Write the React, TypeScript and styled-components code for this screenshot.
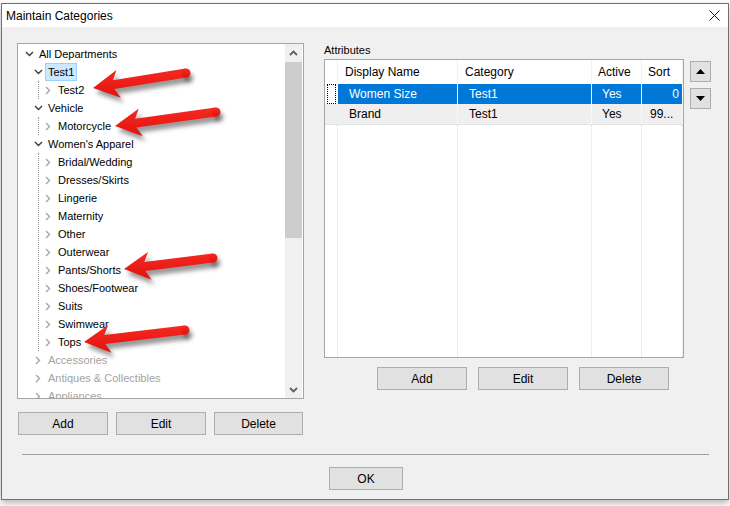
import React from 'react';
import styled, { createGlobalStyle } from 'styled-components';

interface INode {
  label: string;
  open?: boolean;
  selected?: boolean;
  disabled?: boolean;
  children?: INode[];
}

const departments: INode = {
  label: 'All Departments',
  open: true,
  children: [
    { label: 'Test1', open: true, selected: true, children: [{ label: 'Test2' }] },
    { label: 'Vehicle', open: true, children: [{ label: 'Motorcycle' }] },
    {
      label: "Women's Apparel",
      open: true,
      children: [
        'Bridal/Wedding',
        'Dresses/Skirts',
        'Lingerie',
        'Maternity',
        'Other',
        'Outerwear',
        'Pants/Shorts',
        'Shoes/Footwear',
        'Suits',
        'Swimwear',
        'Tops',
      ].map(label => ({ label })),
    },
    { label: 'Accessories', disabled: true },
    { label: 'Antiques & Collectibles', disabled: true },
    { label: 'Appliances', disabled: true },
  ],
};

interface IAttr {
  name: string;
  category: string;
  active: string;
  sort: string;
  selected?: boolean;
}

const attributes: IAttr[] = [
  { name: 'Women Size', category: 'Test1', active: 'Yes', sort: '0', selected: true },
  { name: 'Brand', category: 'Test1', active: 'Yes', sort: '99...' },
];

// tip and tail of each red callout arrow, page coordinates
const callouts: [number, number, number, number][] = [
  [93, 88, 186, 73],
  [115, 126, 216, 112],
  [124, 269, 213, 258],
  [84, 342, 185, 330],
];

const GlobalStyle = createGlobalStyle`
  html, body {
    margin: 0;
    padding: 0;
    background: #ffffff;
  }
  body {
    font-family: 'Liberation Sans', Arial, sans-serif;
    font-size: 11px;
    color: #000;
  }
`;

const Page = styled.div`
  position: relative;
  width: 730px;
  height: 506px;
  overflow: hidden;
  padding: 3px 0 0 1px;
  box-sizing: border-box;
`;

const Window = styled.div`
  width: 728px;
  height: 497px;
  box-sizing: border-box;
  border: 1px solid #707070;
  display: flex;
  flex-direction: column;
  background: #f0f0f0;
  box-shadow: 0 3px 7px rgba(0, 0, 0, 0.3);
`;

const TitleBar = styled.div`
  height: 23px;
  flex: none;
  background: #fff;
  display: flex;
  align-items: center;
  justify-content: space-between;
  padding: 0 8px 0 4px;
  font-size: 12px;
`;

const Client = styled.div`
  flex: 1;
  display: flex;
  flex-direction: column;
`;

const Main = styled.div`
  display: flex;
  padding: 16px 0 0 15px;
`;

const LeftCol = styled.div`
  width: 287px;
`;

const TreeBox = styled.div`
  height: 356px;
  box-sizing: border-box;
  border: 1px solid #a5a5a5;
  background: #fff;
  display: flex;
`;

const TreeContent = styled.div`
  flex: 1;
  overflow: hidden;
  padding-top: 1px;
`;

const Scrollbar = styled.div`
  width: 17px;
  margin-right: 1px;
  background: #f0f0f0;
  display: flex;
  flex-direction: column;
`;

const ScrollArrow = styled.div`
  height: 17px;
  display: flex;
  align-items: center;
  justify-content: center;
`;

const ScrollTrack = styled.div`
  flex: 1;
`;

const ScrollThumb = styled.div`
  height: 176px;
  margin-top: 1px;
  background: #cdcdcd;
`;

const Row = styled.div<{ $indent: number }>`
  height: 18px;
  display: flex;
  align-items: center;
  padding-left: ${p => p.$indent}px;
  white-space: nowrap;
`;

const Toggle = styled.span`
  width: 14px;
  flex: none;
  display: flex;
  align-items: center;
  justify-content: center;
`;

const NodeLabel = styled.span<{ $selected?: boolean; $disabled?: boolean }>`
  border: 1px solid ${p => (p.$selected ? '#99d1ff' : 'transparent')};
  background: ${p => (p.$selected ? '#cce8ff' : 'transparent')};
  color: ${p => (p.$disabled ? '#a3a3a3' : '#000')};
  padding: 0 2px;
  line-height: 16px;
`;

const Guide = styled.div`
  margin-left: 20px;
  border-left: 1px dotted #9a9a9a;
`;

const ButtonRow = styled.div<{ $gap: number; $offset: number; $top: number }>`
  display: flex;
  gap: ${p => p.$gap}px;
  padding-left: ${p => p.$offset}px;
  margin-top: ${p => p.$top}px;
`;

const Button = styled.button<{ $width?: number }>`
  width: ${p => p.$width ?? 90}px;
  height: 23px;
  padding: 0;
  box-sizing: border-box;
  background: #e1e1e1;
  border: 1px solid #adadad;
  border-radius: 0;
  font-family: 'Liberation Sans', Arial, sans-serif;
  font-size: 12px;
  color: #000;
`;

const RightCol = styled.div`
  margin-left: 20px;
`;

const GroupLabel = styled.div`
  height: 14px;
  line-height: 14px;
  margin-bottom: 2px;
`;

const GridRow = styled.div`
  display: flex;
`;

const Grid = styled.div`
  width: 360px;
  height: 299px;
  box-sizing: border-box;
  border: 1px solid #a5a5a5;
  background: #fff;
  display: flex;
  flex-direction: column;
  font-size: 12px;
`;

const columns = '13px 120px 134px 50px 1fr';

const GridHeader = styled.div`
  display: grid;
  grid-template-columns: ${columns};
  height: 24px;
  flex: none;
`;

const HeaderCell = styled.div<{ $pad?: number }>`
  display: flex;
  align-items: center;
  padding-left: ${p => p.$pad ?? 7}px;
  border-right: 1px solid #f0f0f0;
  white-space: nowrap;
`;

const DataRow = styled.div<{ $selected?: boolean }>`
  display: grid;
  grid-template-columns: ${columns};
  height: 20px;
  flex: none;
  background: ${p => (p.$selected ? '#0078d7' : '#efefef')};
  color: ${p => (p.$selected ? '#fff' : '#000')};
  border-bottom: ${p => (p.$selected ? 'none' : '1px dotted #d6d6d6')};
`;

const DataCell = styled.div<{ $pad: number; $right?: boolean; $selected?: boolean }>`
  line-height: 20px;
  padding: 0 3px 0 ${p => p.$pad}px;
  text-align: ${p => (p.$right ? 'right' : 'left')};
  white-space: nowrap;
  overflow: hidden;
  border-right: 1px ${p => (p.$selected ? 'solid' : 'dotted')} #ffffff;
`;

const RowHeaderCell = styled.div<{ $current?: boolean }>`
  background: ${p => (p.$current ? '#fff' : '#efefef')};
  padding: 0 0 0 2px;
  display: flex;
`;

const FocusMark = styled.div`
  width: 7px;
  border: 1px dotted #000;
`;

const Filler = styled.div`
  flex: 1;
  display: grid;
  grid-template-columns: ${columns};
`;

const FillerCell = styled.div`
  border-right: 1px dotted #e0e0e0;
`;

const SideButtons = styled.div`
  display: flex;
  flex-direction: column;
  gap: 6px;
  margin-left: 6px;
  padding-top: 2px;
`;

const MoveButton = styled.button`
  width: 21px;
  height: 21px;
  padding: 0;
  box-sizing: border-box;
  background: #e1e1e1;
  border: 1px solid #adadad;
  border-radius: 0;
  display: flex;
  align-items: center;
  justify-content: center;
`;

const Separator = styled.div`
  height: 1px;
  margin: 19px 19px 0 20px;
  background: #a0a0a0;
`;

const Footer = styled.div`
  padding: 12px 0 0 327px;
`;

const Annotations = styled.svg`
  position: absolute;
  left: 0;
  top: 0;
  pointer-events: none;
`;

const Chevron: React.FC<{ open?: boolean }> = ({ open }) =>
  open ? (
    <svg width='9' height='6' viewBox='0 0 9 6'>
      <polyline points='1,1 4.5,4.5 8,1' fill='none' stroke='#3c3c3c' strokeWidth='1.4' />
    </svg>
  ) : (
    <svg width='6' height='9' viewBox='0 0 6 9'>
      <polyline points='1,1 4.5,4.5 1,8' fill='none' stroke='#a6a6a6' strokeWidth='1.4' />
    </svg>
  );

const indents = [4, 13, 2];

const TreeNode: React.FC<{ node: INode; level: number }> = ({ node, level }) => {
  const kids = node.open && node.children ? node.children : [];
  const childRows = kids.map(child => <TreeNode key={child.label} node={child} level={level + 1} />);
  return (
    <>
      <Row $indent={indents[level]}>
        <Toggle>
          <Chevron open={node.open} />
        </Toggle>
        <NodeLabel $selected={node.selected} $disabled={node.disabled}>
          {node.label}
        </NodeLabel>
      </Row>
      {kids.length > 0 && (level === 1 ? <Guide>{childRows}</Guide> : childRows)}
    </>
  );
};

const Callout: React.FC<{ coords: [number, number, number, number] }> = ({ coords }) => {
  const [tx, ty, ex, ey] = coords;
  const len = Math.hypot(ex - tx, ey - ty);
  const ux = (ex - tx) / len;
  const uy = (ey - ty) / len;
  const nx = -uy;
  const ny = ux;
  const H = 26;
  const W = 14;
  const S = 4.5;
  const back = H - 5;
  const pt = (d: number, w: number) => `${tx + ux * d + nx * w},${ty + uy * d + ny * w}`;
  const points = [pt(0, 0), pt(H, W), pt(back, S), pt(len, S), pt(len, -S), pt(back, -S), pt(H, -W)].join(' ');
  return (
    <>
      <g transform='translate(3 5)' filter='url(#soft)' fill='rgba(0,0,0,0.4)'>
        <polygon points={points} />
        <circle cx={ex} cy={ey} r={S} />
      </g>
      <g fill='url(#red)'>
        <polygon points={points} strokeLinejoin='round' />
        <circle cx={ex} cy={ey} r={S} />
      </g>
    </>
  );
};

export default function App() {
  return (
    <Page>
      <GlobalStyle />
      <Window>
        <TitleBar>
          <span>Maintain Categories</span>
          <svg width='11' height='11' viewBox='0 0 11 11'>
            <path d='M0.5 0.5 L10.5 10.5 M10.5 0.5 L0.5 10.5' stroke='#111' strokeWidth='1' />
          </svg>
        </TitleBar>
        <Client>
          <Main>
            <LeftCol>
              <TreeBox>
                <TreeContent>
                  <TreeNode node={departments} level={0} />
                </TreeContent>
                <Scrollbar>
                  <ScrollArrow>
                    <svg width='9' height='6' viewBox='0 0 9 6'>
                      <polyline points='1,5 4.5,1.5 8,5' fill='none' stroke='#606060' strokeWidth='1.8' />
                    </svg>
                  </ScrollArrow>
                  <ScrollTrack>
                    <ScrollThumb />
                  </ScrollTrack>
                  <ScrollArrow>
                    <svg width='9' height='6' viewBox='0 0 9 6'>
                      <polyline points='1,1 4.5,4.5 8,1' fill='none' stroke='#606060' strokeWidth='1.8' />
                    </svg>
                  </ScrollArrow>
                </Scrollbar>
              </TreeBox>
              <ButtonRow $gap={8} $offset={1} $top={13}>
                <Button>Add</Button>
                <Button>Edit</Button>
                <Button $width={89}>Delete</Button>
              </ButtonRow>
            </LeftCol>
            <RightCol>
              <GroupLabel>Attributes</GroupLabel>
              <GridRow>
                <Grid>
                  <GridHeader>
                    <HeaderCell />
                    <HeaderCell>Display Name</HeaderCell>
                    <HeaderCell>Category</HeaderCell>
                    <HeaderCell $pad={6}>Active</HeaderCell>
                    <HeaderCell $pad={6}>Sort</HeaderCell>
                  </GridHeader>
                  {attributes.map(a => (
                    <DataRow key={a.name} $selected={a.selected}>
                      <RowHeaderCell $current={a.selected}>{a.selected && <FocusMark />}</RowHeaderCell>
                      <DataCell $pad={11} $selected={a.selected}>
                        {a.name}
                      </DataCell>
                      <DataCell $pad={11} $selected={a.selected}>
                        {a.category}
                      </DataCell>
                      <DataCell $pad={10} $selected={a.selected}>
                        {a.active}
                      </DataCell>
                      <DataCell $pad={8} $right={a.selected} $selected={a.selected}>
                        {a.sort}
                      </DataCell>
                    </DataRow>
                  ))}
                  <Filler>
                    <FillerCell />
                    <FillerCell />
                    <FillerCell />
                    <FillerCell />
                    <FillerCell />
                  </Filler>
                </Grid>
                <SideButtons>
                  <MoveButton>
                    <svg width='9' height='5' viewBox='0 0 9 5'>
                      <polygon points='0,5 4.5,0 9,5' fill='#000' />
                    </svg>
                  </MoveButton>
                  <MoveButton>
                    <svg width='9' height='5' viewBox='0 0 9 5'>
                      <polygon points='0,0 9,0 4.5,5' fill='#000' />
                    </svg>
                  </MoveButton>
                </SideButtons>
              </GridRow>
              <ButtonRow $gap={11} $offset={53} $top={9}>
                <Button>Add</Button>
                <Button>Edit</Button>
                <Button>Delete</Button>
              </ButtonRow>
            </RightCol>
          </Main>
          <Separator />
          <Footer>
            <Button $width={74}>OK</Button>
          </Footer>
        </Client>
      </Window>
      <Annotations width='730' height='506' viewBox='0 0 730 506'>
        <defs>
          <filter id='soft' x='-20%' y='-50%' width='140%' height='200%'>
            <feGaussianBlur stdDeviation='2' />
          </filter>
          <linearGradient id='red' x1='0' y1='0' x2='0' y2='1'>
            <stop offset='0' stopColor='#f52a22' />
            <stop offset='1' stopColor='#e3120e' />
          </linearGradient>
        </defs>
        {callouts.map(c => (
          <Callout key={c.join('-')} coords={c} />
        ))}
      </Annotations>
    </Page>
  );
}
